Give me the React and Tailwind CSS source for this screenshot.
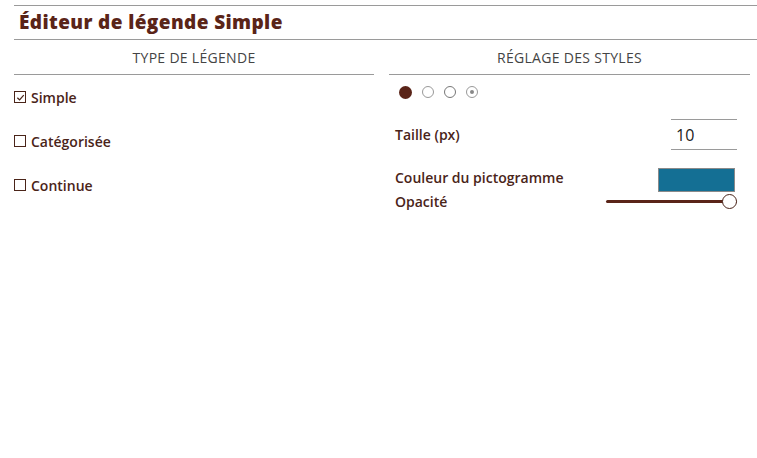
function Check({ checked, label }) {
  return (
    <label className="flex items-center gap-[5px] h-[20px]">
      <span className="w-[12px] h-[12px] border border-[#4a2419] flex items-center justify-center">
        {checked && (
          <svg width="9" height="9" viewBox="0 0 10 10">
            <path d="M1.5 5.2 L4 7.6 L8.6 2.4" fill="none" stroke="#4a2419" strokeWidth="1.4" />
          </svg>
        )}
      </span>
      <span className="text-[14px] font-semibold text-[#4a2419]">{label}</span>
    </label>
  );
}

export default function App() {
  return (
    <div className="w-[757px] h-[458px] bg-white pt-[5px] pl-[14px]" style={{ fontFamily: "'Open Sans', Lato, sans-serif" }}>
      <div className="border-t border-b border-[#9a9a9a] h-[35px] flex items-center pl-[5px]">
        <h1 className="text-[19px] font-extrabold text-[#5a2418] leading-none tracking-[0.4px]">Éditeur de légende Simple</h1>
      </div>

      <div className="flex">
        <div className="w-[360px]">
          <div className="h-[35px] border-b border-[#9a9a9a] flex items-center justify-center pt-[1px] text-[14px] font-normal text-[#444] tracking-[0.3px]">
            TYPE DE LÉGENDE
          </div>
          <div className="flex flex-col gap-[24px] pt-[12px]">
            <Check checked label="Simple" />
            <Check label="Catégorisée" />
            <Check label="Continue" />
          </div>
        </div>

        <div className="w-[361px] ml-[15px]">
          <div className="h-[35px] border-b border-[#9a9a9a] flex items-center justify-center pt-[1px] text-[14px] font-normal text-[#444] tracking-[0.3px]">
            RÉGLAGE DES STYLES
          </div>

          <div className="flex items-center gap-[10px] pl-[10px] mt-[9px] h-[16px]">
            <span className="w-[13px] h-[13px] rounded-full bg-[#5a2418]" />
            <span className="w-[12px] h-[12px] rounded-full border border-[#999]" />
            <span className="w-[12px] h-[12px] rounded-full border-[1.5px] border-[#777]" />
            <span className="w-[12px] h-[12px] rounded-full border-[1.5px] border-[#999] flex items-center justify-center">
              <span className="w-[4px] h-[4px] rounded-full bg-[#888]" />
            </span>
          </div>

          <div className="flex items-center justify-between pl-[6px] pr-[13px] mt-[19px]">
            <span className="text-[14px] font-semibold text-[#4a2419]">Taille (px)</span>
            <div className="w-[66px] h-[31px] border-t border-b border-[#9a9a9a] flex items-center pl-[5px] text-[16px] text-[#222]">
              10
            </div>
          </div>

          <div className="flex justify-between pl-[6px] pr-[15px] mt-[18px]">
            <div className="flex flex-col gap-[5px] text-[14px] font-semibold text-[#4a2419] leading-[19px]">
              <span>Couleur du pictogramme</span>
              <span>Opacité</span>
            </div>
            <div className="flex flex-col items-end">
              <div className="w-[77px] h-[24px] bg-[#146f94] border border-[#8a8a8a]" />
              <div className="relative w-[131px] h-[14px] mr-[-2px] mt-[2px] flex items-center">
                <div className="w-full h-[3px] bg-[#5a2418] rounded" />
                <span className="absolute right-0 top-0 w-[15px] h-[15px] rounded-full bg-white border-[1.5px] border-[#4a2419]" />
              </div>
            </div>
          </div>
        </div>
      </div>
    </div>
  );
}
